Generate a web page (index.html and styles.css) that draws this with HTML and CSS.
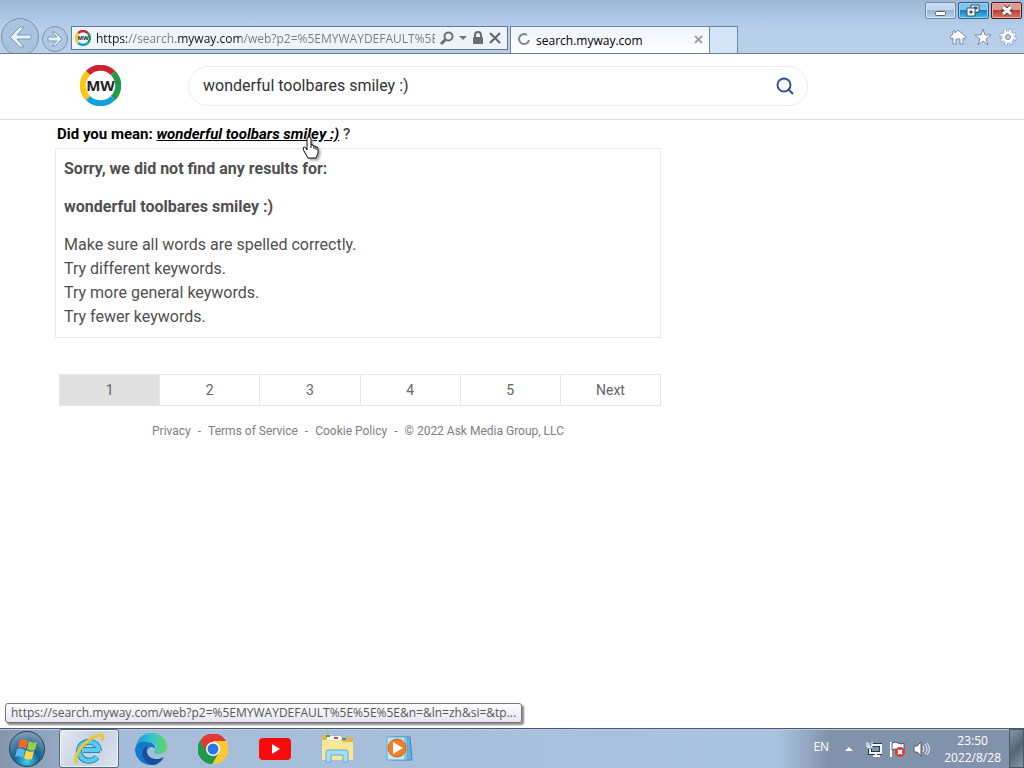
FILE: index.html
```html
<!DOCTYPE html>
<html lang="en">
<head>
<meta charset="utf-8">
<title>search.myway.com</title>
<link rel="stylesheet" href="styles.css">
</head>
<body>
<svg class="defs" aria-hidden="true">
  <symbol id="mw" viewBox="0 0 41 41">
    <g fill="none" stroke-width="6">
      <path stroke="#cf2430" d="M8 8A17.500 17.500 0 0 1 33 8"/>
      <path stroke="#259a46" d="M33 8A17.500 17.500 0 0 1 33 33"/>
      <path stroke="#12a0dd" d="M33 33A17.500 17.500 0 0 1 8 33"/>
      <path stroke="#fbc712" d="M8 33A17.500 17.500 0 0 1 8 8"/>
    </g>
    <text x="20.500" y="26" text-anchor="middle" class="logo-text">MW</text>
  </symbol>
</svg>

<header class="browser">
  <div class="window-buttons">
    <button class="win-btn" aria-label="Minimize"><svg width="30" height="16"><rect x="9.500" y="8.500" width="10" height="4" rx="1" fill="#fff" stroke="#59647a"/></svg></button>
    <button class="win-btn restore" aria-label="Restore"><svg width="30" height="16"><g fill="#fff" stroke="#374c66"><path d="M12 2h8v7h-8z"/><path d="M15 4h3v2h-3z" fill="#278bc2"/><path d="M8 5h8v8H8z"/><path d="M11 8h2v2h-2z" fill="#278bc2"/></g></svg></button>
    <button class="win-btn close" aria-label="Close"><svg width="30" height="16"><path d="M11 4l8 7M19 4l-8 7" stroke="#59343a" stroke-width="5"/><path d="M11 4l8 7M19 4l-8 7" stroke="#fff" stroke-width="3"/></svg></button>
  </div>
  <div class="nav-row">
    <div class="history">
      <button class="back" aria-label="Back"><svg width="38" height="36" viewBox="0 0 38 36"><circle cx="19" cy="19" r="18.500" fill="#a9c2de" stroke="#7e93ae"/><path d="M9 19l10-10h4l-7 8h14v4H16l7 8h-4z" fill="#e4f0fc" stroke="#7f99b8" stroke-linejoin="round"/></svg></button>
      <button class="forward" aria-label="Forward"><svg width="26" height="26" viewBox="0 0 26 26"><circle cx="13" cy="13" r="12.500" fill="#afc8e4" stroke="#7e93ae"/><path d="M20 13l-7-7h-3l5 5H6v4h9l-5 5h3z" fill="#e4f0fc" stroke="#7f99b8" stroke-linejoin="round"/></svg></button>
    </div>
    <form class="address">
      <svg class="favicon" width="16" height="16"><use href="#mw"/></svg>
      <input class="url" aria-label="Address" value="https://search.myway.com/web?p2=%5EMYWAYDEFAULT%5E%5E%5E">
      <button type="button" aria-label="Search"><svg width="14" height="14"><circle cx="8.500" cy="5.500" r="4" fill="none" stroke="#6c7078" stroke-width="2"/><path d="M6 8l-5 5" stroke="#6c7078" stroke-width="3"/></svg></button>
      <button type="button" aria-label="Address list"><svg width="8" height="4"><path d="M0 0h8L4 4z" fill="#73777f"/></svg></button>
      <svg class="lock" width="12" height="14"><path d="M3 7V4a3 3 0 0 1 6 0v3" fill="none" stroke="#6c6d74" stroke-width="2"/><rect x="1" y="6" width="10" height="7" rx="1" fill="#6c6d74"/></svg>
      <button type="button" aria-label="Stop"><svg width="12" height="12"><path d="M1 1l10 10M11 1L1 11" stroke="#62656d" stroke-width="2"/></svg></button>
    </form>
    <div class="tabs">
      <div class="tab">
        <svg width="14" height="14"><path d="M10 2A5 5 0 1 0 12 7" fill="none" stroke="#84888f" stroke-width="2"/></svg>
        <span>search.myway.com</span>
        <button aria-label="Close tab"><svg width="10" height="10"><path d="M1 1l7 7M8 1L1 8" stroke="#a0a3a6" stroke-width="2"/></svg></button>
      </div>
      <button class="new-tab" aria-label="New tab"></button>
    </div>
    <div class="tools">
      <button aria-label="Home"><svg width="18" height="18"><path d="M9 2l8 7-1 2-2-1v6h-3v-5H7v5H4v-6l-2 1-1-2 3-3V3h2v2z" fill="#fff" stroke="#788fab"/></svg></button>
      <button aria-label="Favorites"><svg width="18" height="18"><path d="M9 1l2 6h6l-5 4 2 6-5-4-5 4 2-6-5-4h6z" fill="#fff" stroke="#788fab"/></svg></button>
      <button aria-label="Settings"><svg width="18" height="18" viewBox="0 0 18 18"><circle cx="9" cy="9" r="6.500" fill="none" stroke="#788fab" stroke-width="4" stroke-dasharray="3.100 2"/><circle cx="9" cy="9" r="6.500" fill="none" stroke="#fff" stroke-width="3" stroke-dasharray="2.100 3" stroke-dashoffset="-.5"/><circle cx="9" cy="9" r="4" fill="none" stroke="#fff" stroke-width="3"/><circle cx="9" cy="9" r="2.500" fill="none" stroke="#788fab"/></svg></button>
    </div>
  </div>
</header>

<main class="page">
  <div class="search-header">
    <a class="brand" href="#" aria-label="MyWay"><svg width="41" height="41"><use href="#mw"/></svg></a>
    <form class="search-box">
      <input aria-label="Search the web" value="wonderful toolbares smiley :)">
      <button type="button" aria-label="Search"><svg width="18" height="18"><circle cx="8" cy="8" r="6.500" fill="none" stroke="#31539a" stroke-width="2"/><path d="M12 12l5 5" stroke="#31539a" stroke-width="2"/></svg></button>
    </form>
  </div>
  <div class="results">
    <p class="suggestion"><b>Did you mean:</b> <a href="#">wonderful toolbars smiley :)<svg class="cursor" width="18" height="23" viewBox="0 0 18 23"><path d="M5 14V3q0-2 2-2t2 2v6q1-1 2 0v1q2-1 3 1 2-1 2 2v4l-2 5H6l-4-7-1-3q1-2 3 0z" fill="#fff" stroke="#111"/><path d="M9 9v3M12 10v3M14 11v3" stroke="#111"/></svg></a> <span>?</span></p>
    <section class="no-results">
      <h1>Sorry, we did not find any results for:</h1>
      <h2>wonderful toolbares smiley :)</h2>
      <ul>
        <li>Make sure all words are spelled correctly.</li>
        <li>Try different keywords.</li>
        <li>Try more general keywords.</li>
        <li>Try fewer keywords.</li>
      </ul>
    </section>
    <nav class="pagination" aria-label="Pages">
      <a class="current" href="#">1</a><a href="#">2</a><a href="#">3</a><a href="#">4</a><a href="#">5</a><a href="#">Next</a>
    </nav>
    <footer class="legal"><a href="#">Privacy</a><span>-</span><a href="#">Terms of Service</a><span>-</span><a href="#">Cookie Policy</a><span>-</span><span>© 2022 Ask Media Group, LLC</span></footer>
  </div>
  <div class="status">https://search.myway.com/web?p2=%5EMYWAYDEFAULT%5E%5E%5E&amp;n=&amp;ln=zh&amp;si=&amp;tp...</div>
</main>

<footer class="taskbar">
  <button class="start" aria-label="Start"><svg width="38" height="38" viewBox="0 0 38 38">
    <defs><radialGradient id="orb" cx=".5" cy=".85" r=".8"><stop offset="0" stop-color="#3fd0f0"/><stop offset=".45" stop-color="#14628f"/><stop offset="1" stop-color="#7c9ab4"/></radialGradient></defs>
    <circle cx="19" cy="19" r="17.500" fill="url(#orb)" stroke="#243e58"/>
    <path d="M12 10q4-2 8 1l-2 8q-4-3-8-1z" fill="#ef6a2c"/><path d="M21 11q4 3 8 1l-2 8q-4 2-8-1z" fill="#98cf44"/><path d="M9 19q4-2 8 1l-2 8q-4-3-8-1z" fill="#58b9ef"/><path d="M18 20q4 3 8 1l-2 8q-4 2-8-1z" fill="#fdd646"/></svg></button>
  <button class="task active" aria-label="Internet Explorer"><svg width="32" height="32" viewBox="0 0 32 32"><path d="M27 17H10M26 18a10 9.500 0 1 0-2 6" fill="none" stroke="#2386b8" stroke-width="6"/><path d="M26 17H10M26 18a10 9.500 0 1 0-2 6" fill="none" stroke="#5ccbf0" stroke-width="4"/><path d="M4 30C-2 22 16 3 28 2q3 0 1 5" fill="none" stroke="#f3c52d" stroke-width="3"/></svg></button>
  <button class="task" aria-label="Edge"><svg width="32" height="32" viewBox="0 0 32 32">
    <defs><linearGradient id="edge-top"><stop offset="0" stop-color="#2194d5"/><stop offset=".5" stop-color="#33c4d3"/><stop offset="1" stop-color="#66d75b"/></linearGradient></defs>
    <path d="M1 13C3 4 9 0 16 0c9 0 16 6 16 13 0 6-4 8-8 8-5 0-6-2-4-4 3-5-2-8-7-8-6 0-10 2-12 4z" fill="url(#edge-top)"/>
    <path d="M0 16C1 10 7 8 12 9c6 0 9 4 8 7-3-4-8-1-8 3 0 7 10 10 17 5-3 5-8 8-13 8C7 32 0 25 0 16z" fill="#1878cb"/>
    <path d="M12 13c-5 3-6 8-3 13 2 4 6 6 9 6 4 0 9-4 11-8-6 4-15 2-17-4-1-3 0-5 0-7z" fill="#13519f"/></svg></button>
  <button class="task" aria-label="Chrome"><svg width="30" height="30" viewBox="0 0 30 30"><path d="M15 15L2 7a15 15 0 0 1 26 0z" fill="#df3b30"/><path d="M15 7h13a15 15 0 0 1-14 23l7-12z" fill="#fcc934"/><path d="M2 7a15 15 0 0 0 12 23l7-12H9z" fill="#229a4e"/><path d="M2 7l6 11 7-3V7z" fill="#df3b30"/><path d="M2 7a15 15 0 0 0 12 23l7-12-7 3-6-4z" fill="#229a4e"/><circle cx="15" cy="15" r="7" fill="#fff"/><circle cx="15" cy="15" r="5.500" fill="#2878e7"/></svg></button>
  <button class="task" aria-label="YouTube"><svg width="32" height="22"><rect width="32" height="22" rx="4" fill="#f80b0b"/><path d="M13 6l8 5-8 5z" fill="#fff"/></svg></button>
  <button class="task" aria-label="Explorer"><svg width="32" height="30" viewBox="0 0 32 30"><path d="M1 3V1h7l1 2h21q2 0 2 2v20H1z" fill="#dbb853"/><path d="M6 2h14l1 4H6z" fill="#fff"/><path d="M5 1h4v2H5z" fill="#40a249"/><path d="M13 3h4v2h-4z" fill="#ce4741"/><path d="M21 4h4v2h-4z" fill="#3f83c9"/><path d="M1 6h19l2 2h10v18H1z" fill="#f9e697"/><path d="M5 28V18q0-2 2-2h18q2 0 2 2v10h-5v-7H10v7z" fill="#a6def5" stroke="#5caed4"/></svg></button>
  <button class="task" aria-label="Media Player"><svg width="27" height="25" viewBox="0 0 27 25"><path d="M7 1h17l2 23H7z" fill="#6bafd9" stroke="#398cbe"/><path d="M4 1h17v23H4z" fill="#a9d9f2" stroke="#57a4ce"/><path d="M1 1h18v23H1z" fill="#c3e4f6" stroke="#66a9ce"/><circle cx="11" cy="12" r="9" fill="#ef7e24" stroke="#ca681c"/><path d="M7 6l10 6-10 6z" fill="#fff"/></svg></button>
  <div class="tray">
    <span class="language">EN</span>
    <button class="more" aria-label="Show hidden icons"><svg width="8" height="5"><path d="M0 5l4-4 4 4z" fill="#fff"/></svg></button>
    <div class="tray-icons">
      <svg width="16" height="16"><path d="M6 4h9v8H4V8M7 15h7M10 12v3" fill="none" stroke="#263746" stroke-width="4"/><path d="M6 4h9v8H4V8M7 15h7M10 12v3" fill="none" stroke="#f1f6f9" stroke-width="2"/><path d="M1 1v5h5V1M3 2v5" fill="none" stroke="#fff"/></svg>
      <svg width="17" height="16"><path d="M2 1v15" stroke="#fff" stroke-width="2"/><path d="M3 2q3-2 6 0t6 0v7q-3 2-6 0t-6 0z" fill="#f8fafc" stroke="#4b5a68"/><circle cx="11" cy="11" r="5" fill="#d63931"/><path d="M9 9l4 4M13 9l-4 4" stroke="#fff" stroke-width="2"/></svg>
      <svg width="17" height="16"><path d="M1 5h3l4-4v14l-4-4H1z" fill="#fff" stroke="#485969"/><path d="M10 5q2 3 0 6M12 3q4 5 0 10M14 2q5 6 0 12" fill="none" stroke="#e9f0f5"/></svg>
    </div>
    <time class="clock">23:50<br>2022/8/28</time>
  </div>
  <button class="show-desktop" aria-label="Show desktop"></button>
</footer>
</body>
</html>
```

FILE: styles.css
```css
* { box-sizing: border-box; }
body {
  margin: 0;
  min-height: 100vh;
  display: flex;
  flex-direction: column;
  font-family: Roboto, "Liberation Sans", sans-serif;
  background: #fff;
}
button { padding: 0; border: 0; background: none; display: grid; place-items: center; }
input { min-width: 0; border: 0; padding: 0; outline: 0; }
svg { display: block; flex: none; }
.defs { display: none; }
.logo-text { font: bold 15px "Open Sans", sans-serif; fill: #222; }

.browser {
  background: linear-gradient(#9db8d5, #b7cfeb 28px, #b8cfe9);
  border-bottom: 1px solid #6b7c90;
  font-family: "Open Sans", sans-serif;
}
.window-buttons { display: flex; justify-content: flex-end; gap: 2px; padding: 2px 2px 0; height: 18px; }
.win-btn {
  width: 31px;
  height: 17px;
  border: 1px solid #6f88a8;
  border-radius: 2px;
  background: linear-gradient(#c5d8ec 45%, #9cb5d0 50%, #b7d0e7);
  box-shadow: inset 0 0 0 1px #d6e5f4;
}
.restore { border-color: #315f87; background: linear-gradient(#83c3e9 45%, #1e7fb9 50%, #39c2ed); box-shadow: inset 0 0 0 1px #8fd4f2; }
.close { border-color: #4f171b; background: linear-gradient(#dc9b91 45%, #b93c31 50%, #d9786a); box-shadow: inset 0 0 0 1px #e9aaa0; }
.nav-row { display: flex; align-items: flex-end; height: 35px; padding-left: 1px; }
.history { display: flex; align-items: flex-end; gap: 3px; width: 70px; height: 35px; }
.back { height: 35px; overflow: hidden; }
.forward { height: 28px; }
.address {
  flex: 0 1 437px;
  display: flex;
  align-items: center;
  gap: 5px;
  height: 24px;
  margin-bottom: 3px;
  padding: 0 6px 0 3px;
  background: #edf4fc;
  border: 1px solid #62788f;
}
.url {
  flex: 1;
  height: 20px;
  font: 12px "Open Sans", sans-serif;
  color: transparent;
  background: linear-gradient(90deg, #111 31px, #747a82 31px 80px, #111 80px 145px, #747a82 145px);
  -webkit-background-clip: text;
  background-clip: text;
}
.tabs { flex: 0 1 228px; display: flex; height: 27px; margin-left: 2px; }
.tab {
  flex: 1;
  display: flex;
  align-items: center;
  gap: 5px;
  padding: 0 5px 0 6px;
  font-size: 12px;
  border: 1px solid #71869e;
  border-bottom: 0;
  background: linear-gradient(#edf5fb, #fff);
}
.tab span { flex: 1; }
.new-tab { width: 28px; border: 1px solid #71869e; border-width: 1px 1px 0 0; background: #d4e5f8; }
.tools { margin-left: auto; display: flex; gap: 7px; padding: 0 7px 7px 0; }

.page { flex: 1; display: flex; flex-direction: column; }
.search-header { display: flex; align-items: center; height: 66px; padding: 0 16px 2px 80px; border-bottom: 1px solid #dcdcdc; }
.search-box {
  flex: 0 1 620px;
  display: flex;
  align-items: center;
  height: 40px;
  margin-left: 67px;
  padding: 0 13px 0 14px;
  border: 1px solid #ececec;
  border-radius: 20px;
}
.search-box input { flex: 1; font: 16px Roboto, sans-serif; color: #333; }
.results { max-width: 661px; padding-left: 55px; }
.suggestion { margin: 0; padding: 4px 2px; font-size: 15px; line-height: 20px; color: #444; }
.suggestion b { color: #000; font-weight: 700; }
.suggestion a { position: relative; color: #000; font-weight: 700; font-style: italic; }
.suggestion span { font-weight: 500; }
.cursor { position: absolute; right: 19px; top: 5px; margin-top: 6px; filter: drop-shadow(2px 2px 1px #aaa); }
.no-results { border: 1px solid #ebebeb; padding: 8px; font-size: 16px; line-height: 24px; color: #505050; }
.no-results h1, .no-results h2 { margin: 0 0 14px; font-size: 16px; font-weight: 700; }
.no-results ul { margin: 0; padding: 0; list-style: none; }
.pagination { display: flex; margin: 36px 0 0 4px; border: 1px solid #e6e6e6; }
.pagination a { flex: 1; padding: 5px 0; font-size: 14px; line-height: 20px; text-align: center; color: #666; text-decoration: none; }
.pagination a + a { border-left: 1px solid #e6e6e6; }
.pagination .current { background: #e0e0e0; }
.legal { display: flex; justify-content: center; gap: 7px; margin-top: 17px; font-size: 12px; line-height: 16px; color: #808080; }
.legal a { color: inherit; text-decoration: none; }
.status {
  align-self: flex-start;
  margin: auto 0 5px 5px;
  padding: 0 5px;
  font: 12px/18px "Open Sans", sans-serif;
  color: #575757;
  white-space: nowrap;
  border: 1px solid #767676;
  border-radius: 3px;
  background: linear-gradient(#fff, #e5e5ee);
  box-shadow: 2px 2px 2px #888;
}

.taskbar {
  display: flex;
  height: 40px;
  border-top: 1px solid #4a5a6b;
  background: linear-gradient(90deg, #8495ac, #a6bdd9 120px, #a9c2df 76%, #8193aa 81%);
  box-shadow: inset 0 1px #bdcbdc;
}
.start { width: 54px; }
.task { width: 60px; margin-right: 2px; }
.active { margin-left: 5px; border: 1px solid #53677e; border-radius: 3px; background: linear-gradient(120deg, #e5ebf2, #c4d0de 50%, #dce5ef); box-shadow: inset 0 0 0 1px #eef4fa; }
.tray { margin-left: auto; display: flex; align-items: center; color: #fff; font: 12px/17px "Open Sans", sans-serif; }
.language { padding-bottom: 5px; margin-right: 16px; }
.more { margin-right: 13px; }
.tray-icons { display: flex; gap: 7px; margin-right: 14px; }
.clock { text-align: center; margin-right: 8px; }
.show-desktop { width: 15px; border: 1px solid #4b5969; background: linear-gradient(135deg, #8796a8, #56667a 50%, #8494a7); }
```
